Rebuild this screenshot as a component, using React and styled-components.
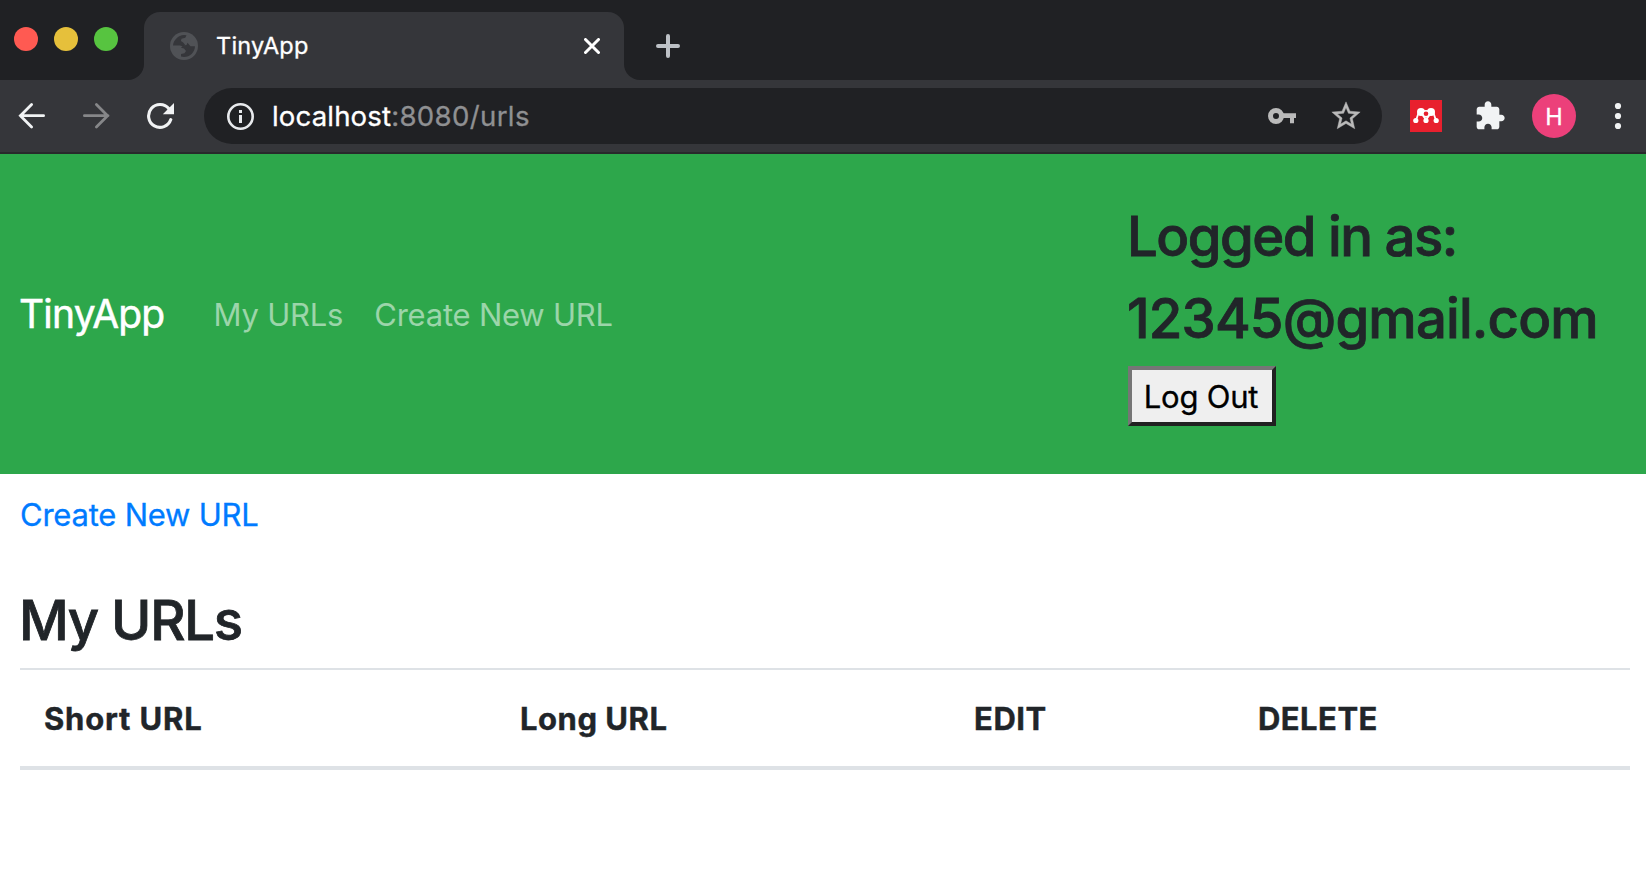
import React from "react";
import styled, { createGlobalStyle } from "styled-components";

const GlobalStyle = createGlobalStyle`
  *, *::before, *::after { box-sizing: border-box; }
  body {
    margin: 0;
    background: #fff;
    color: #212529;
    font-family: Inter, "Liberation Sans", sans-serif;
    -webkit-text-stroke: 0.3px;
  }
`;

const Window = styled.div`
  display: flex;
  flex-direction: column;
  height: 894px;
  overflow: hidden;
`;

const TabStrip = styled.header`
  display: flex;
  height: 80px;
  background: #35363a;
`;

const WindowControls = styled.div`
  display: flex;
  flex: none;
  width: 144px;
  gap: 16px;
  padding: 27px 0 0 14px;
  border-bottom-right-radius: 16px;
  background: #202124;
`;

const ControlDot = styled.span`
  width: 24px;
  height: 24px;
  border-radius: 50%;
  background: ${(p) => p.$color};
`;

const TabSlot = styled.div`
  flex: none;
  width: 480px;
  height: 80px;
  padding-top: 12px;
  background: #202124;
`;

const Tab = styled.div`
  display: flex;
  align-items: center;
  height: 68px;
  padding: 0 24px 0 26px;
  border-radius: 16px 16px 0 0;
  background: #35363a;
`;

const TabTitle = styled.span`
  flex: 1;
  padding: 0 0 1px 18px;
  color: #fff;
  font-size: 23.5px;
  line-height: 32px;
  letter-spacing: 0.22px;
`;

const StripRest = styled.div`
  display: flex;
  flex: 1;
  padding: 34px 0 0 32px;
  border-bottom-left-radius: 16px;
  background: #202124;
`;

const Toolbar = styled.div`
  display: flex;
  align-items: center;
  height: 74px;
  padding: 0 12px 0 18px;
  background: #35363a;
  border-bottom: 2px solid #28292b;
`;

const NavButtons = styled.div`
  display: flex;
  flex: none;
  width: 186px;
  gap: 36px;
`;

const AddressBar = styled.div`
  display: flex;
  align-items: center;
  flex: none;
  width: 1178px;
  height: 56px;
  padding: 0 19px 0 22px;
  border-radius: 28px;
  background: #202124;
`;

const Address = styled.span`
  flex: 1;
  padding: 0 0 1px 17px;
  color: #fff;
  font-size: 27.6px;
  line-height: 40px;
  letter-spacing: 0.14px;
`;

const AddressPath = styled.span`
  color: #8f9092;
  letter-spacing: 0.34px;
`;

const AddressIcons = styled.div`
  display: flex;
  align-items: center;
  gap: 33px;
`;

const Extensions = styled.div`
  display: flex;
  align-items: center;
  flex: 1;
  padding-left: 28px;
`;

const ExtensionIcon = styled.span`
  display: flex;
  margin-right: ${(p) => p.$gap}px;
`;

const Avatar = styled.span`
  display: flex;
  align-items: center;
  justify-content: center;
  width: 44px;
  height: 44px;
  margin-right: 28px;
  border-radius: 50%;
  background: #ec407a;
  color: #fff;
  font-size: 23.5px;
`;

const Navbar = styled.nav`
  display: flex;
  flex: none;
  height: 320px;
  padding: 0 20px;
  background: #2da74b;
`;

const NavLinks = styled.div`
  display: flex;
  align-items: center;
  flex: 1;
`;

const Brand = styled.a`
  margin: 0 49px 1px -1px;
  color: #fff;
  font-size: 39px;
  letter-spacing: -0.8px;
  -webkit-text-stroke-width: 0.5px;
`;

const NavLink = styled.a`
  margin-right: 31px;
  padding-top: 1px;
  color: rgba(255, 255, 255, 0.53);
  font-size: 31px;
  letter-spacing: ${(p) => p.$spacing}px;
  -webkit-text-stroke-width: 0;
`;

const Account = styled.div`
  flex: none;
  width: 498px;
  padding-top: 49px;
`;

const AccountLine = styled.h3`
  margin: 0 0 ${(p) => p.$gap}px -1px;
  font-size: 54.5px;
  font-weight: 500;
  line-height: 66px;
  letter-spacing: ${(p) => p.$spacing}px;
  white-space: nowrap;
  -webkit-text-stroke-width: 0.8px;
`;

const LogOutButton = styled.button`
  display: block;
  width: 148px;
  height: 60px;
  padding: 1px 2px 0 0;
  border: 4px solid;
  border-color: #767676 #212121 #212121 #767676;
  background: #efefef;
  color: #000;
  font-family: inherit;
  font-size: 31px;
  line-height: 50px;
  letter-spacing: -0.2px;
`;

const Main = styled.main`
  padding: 16px 16px 0 20px;
`;

const CreateLink = styled.a`
  display: block;
  color: #007bff;
  font-size: 31px;
  line-height: 50px;
  letter-spacing: -0.22px;
`;

const Title = styled.h3`
  margin: 47px 0 15px -1px;
  font-size: 54.5px;
  font-weight: 500;
  line-height: 66px;
  letter-spacing: -1.3px;
  -webkit-text-stroke-width: 0.8px;
`;

const Table = styled.table`
  width: 1610px;
  border-collapse: separate;
  border-spacing: 0;
  table-layout: fixed;
`;

const HeadCell = styled.th`
  width: ${(p) => p.$width}px;
  height: 102px;
  padding: 2px 24px 0;
  border-top: 2px solid #dee2e6;
  border-bottom: 4px solid #dee2e6;
  font-size: 31px;
  font-weight: 700;
  line-height: 48px;
  letter-spacing: ${(p) => p.$spacing}px;
  text-align: left;
  -webkit-text-stroke-width: 0.4px;
`;

const GlobeIcon = () => (
  <svg width="28" height="28" viewBox="0 0 28 28">
    <circle cx="14" cy="14" r="14" fill="#505256" />
    <path d="M3 13.500C3.500 8 8 3.500 14 3l2.500.3-1.200 2.400-3.800 1-.6 2.300 2.300 1.600 2 2.400-2 1.500-3.200-1z" fill="#35363a" />
    <path d="M25 14.200c-.2 6-5 10.800-11 10.800l-3-.5v-2.500l3.500-.7 1.500-2.300-2-2.500-3-.8 2.200-2.200 3.300-.5 1-2.300 3 3.500z" fill="#35363a" />
  </svg>
);

const CloseIcon = () => (
  <svg width="16" height="16" viewBox="0 0 16 16" stroke="#fff" strokeWidth="3" strokeLinecap="round">
    <path d="M1.500 1.500l13 13M14.500 1.500l-13 13" />
  </svg>
);

const PlusIcon = () => (
  <svg width="24" height="24" viewBox="0 0 24 24" stroke="#bdc1c6" strokeWidth="4" strokeLinecap="round">
    <path d="M12 2v20M2 12h20" />
  </svg>
);

const ArrowIcon = ({ color, flip }) => (
  <svg width="28" height="28" viewBox="0 0 28 28" fill="none" stroke={color} strokeWidth="2.800" strokeLinecap="round">
    <path d={flip ? "M2.400 13.700H26M14.400 2.500L25.600 13.700 14.400 24.900" : "M25.600 13.700H2.400M13.600 2.500L2.400 13.700l11.200 11.200"} />
  </svg>
);

const ReloadIcon = () => (
  <svg width="28" height="28" viewBox="0 0 28 28">
    <path d="M22.900 6.800A11.400 11.400 0 1 0 24.800 17.600" fill="none" stroke="#f1f3f4" strokeWidth="3.100" strokeLinecap="round" />
    <path d="M28 1v11.200H16.800z" fill="#f1f3f4" />
  </svg>
);

const InfoIcon = () => (
  <svg width="29" height="28" viewBox="0 0 29 28">
    <circle cx="14.500" cy="14.500" r="12.200" fill="none" stroke="#e8eaed" strokeWidth="2.600" />
    <path d="M13 13h3v8h-3zM13 8h3v3h-3z" fill="#e8eaed" />
  </svg>
);

const KeyIcon = () => (
  <svg width="28" height="16" viewBox="0 0 28 16">
    <circle cx="8" cy="8" r="5.500" fill="none" stroke="#bababa" strokeWidth="5" />
    <path d="M14 5.300H28v4.600h-2V15.300h-4v-5.400h-8z" fill="#bababa" />
  </svg>
);

const StarIcon = () => (
  <svg width="34" height="34" viewBox="0 0 24 24" fill="#bababa" stroke="#bababa" strokeWidth="0.300">
    <path d="M22 9.240l-7.190-.62L12 2 9.190 8.630 2 9.240l5.460 4.730L5.820 21 12 17.270 18.180 21l-1.630-7.030L22 9.240zM12 15.400l-3.760 2.270 1-4.280-3.320-2.880 4.380-.38L12 6.100l1.710 4.040 4.380.38-3.320 2.880 1 4.280L12 15.400z" />
  </svg>
);

const MendeleyIcon = () => (
  <svg width="32" height="32" viewBox="0 0 32 32">
    <path d="M0 0h32v32H0z" fill="#e8202e" />
    <path d="M8.500 13L6 20.500M23.500 13l2.500 7.500M12 14l4 6 4-6" fill="none" stroke="#fff" strokeWidth="1.800" />
    <g fill="#fff">
      <circle cx="11" cy="12" r="4" />
      <circle cx="21" cy="12" r="4" />
      <circle cx="5.800" cy="20.500" r="2.600" />
      <circle cx="16" cy="20.500" r="2.600" />
      <circle cx="26.200" cy="20.500" r="2.600" />
      <circle cx="16" cy="13.800" r="3.900" />
    </g>
    <circle cx="16" cy="13.800" r="2.300" fill="#e8202e" />
  </svg>
);

const PuzzleIcon = () => (
  <svg width="32" height="32" viewBox="0 0 24 24" fill="#f1f3f4">
    <path d="M20.500 11H19V7c0-1.100-.9-2-2-2h-4V3.500C13 2.120 11.880 1 10.500 1S8 2.120 8 3.500V5H4c-1.100 0-1.990.9-1.990 2v3.800H3.500c1.490 0 2.700 1.210 2.700 2.700s-1.210 2.700-2.700 2.700H2V20c0 1.100.9 2 2 2h3.800v-1.500c0-1.490 1.210-2.700 2.700-2.700 1.490 0 2.700 1.210 2.700 2.700V22H17c1.100 0 2-.9 2-2v-4h1.500c1.380 0 2.500-1.120 2.500-2.500S21.880 11 20.500 11z" />
  </svg>
);

const MenuIcon = () => (
  <svg width="28" height="28" viewBox="0 0 28 28" fill="#f1f3f4">
    <circle cx="14" cy="4" r="3.100" />
    <circle cx="14" cy="14" r="3.100" />
    <circle cx="14" cy="24" r="3.100" />
  </svg>
);

const columns = [
  { label: "Short URL", width: 476, spacing: 0.82 },
  { label: "Long URL", width: 454, spacing: 0.52 },
  { label: "EDIT", width: 284, spacing: 0.56 },
  { label: "DELETE", width: 396, spacing: 0.45 },
];

export default function App() {
  return (
    <Window>
      <GlobalStyle />
      <TabStrip>
        <WindowControls>
          <ControlDot $color="#ff5a52" />
          <ControlDot $color="#e6c03b" />
          <ControlDot $color="#57c440" />
        </WindowControls>
        <TabSlot>
          <Tab>
            <GlobeIcon />
            <TabTitle>TinyApp</TabTitle>
            <CloseIcon />
          </Tab>
        </TabSlot>
        <StripRest>
          <PlusIcon />
        </StripRest>
      </TabStrip>
      <Toolbar>
        <NavButtons>
          <ArrowIcon color="#f1f3f4" />
          <ArrowIcon color="#868789" flip />
          <ReloadIcon />
        </NavButtons>
        <AddressBar>
          <InfoIcon />
          <Address>
            localhost<AddressPath>:8080/urls</AddressPath>
          </Address>
          <AddressIcons>
            <KeyIcon />
            <StarIcon />
          </AddressIcons>
        </AddressBar>
        <Extensions>
          <ExtensionIcon $gap={32}>
            <MendeleyIcon />
          </ExtensionIcon>
          <ExtensionIcon $gap={26}>
            <PuzzleIcon />
          </ExtensionIcon>
          <Avatar>H</Avatar>
          <MenuIcon />
        </Extensions>
      </Toolbar>
      <Navbar>
        <NavLinks>
          <Brand>TinyApp</Brand>
          <NavLink $spacing={-0.2}>My URLs</NavLink>
          <NavLink $spacing={-0.22}>Create New URL</NavLink>
        </NavLinks>
        <Account>
          <AccountLine $gap={16} $spacing={-1.5}>Logged in as:</AccountLine>
          <AccountLine $gap={15} $spacing={-0.83}>12345@gmail.com</AccountLine>
          <LogOutButton>Log Out</LogOutButton>
        </Account>
      </Navbar>
      <Main>
        <CreateLink>Create New URL</CreateLink>
        <Title>My URLs</Title>
        <Table>
          <thead>
            <tr>
              {columns.map((c) => (
                <HeadCell key={c.label} $width={c.width} $spacing={c.spacing}>
                  {c.label}
                </HeadCell>
              ))}
            </tr>
          </thead>
        </Table>
      </Main>
    </Window>
  );
}
